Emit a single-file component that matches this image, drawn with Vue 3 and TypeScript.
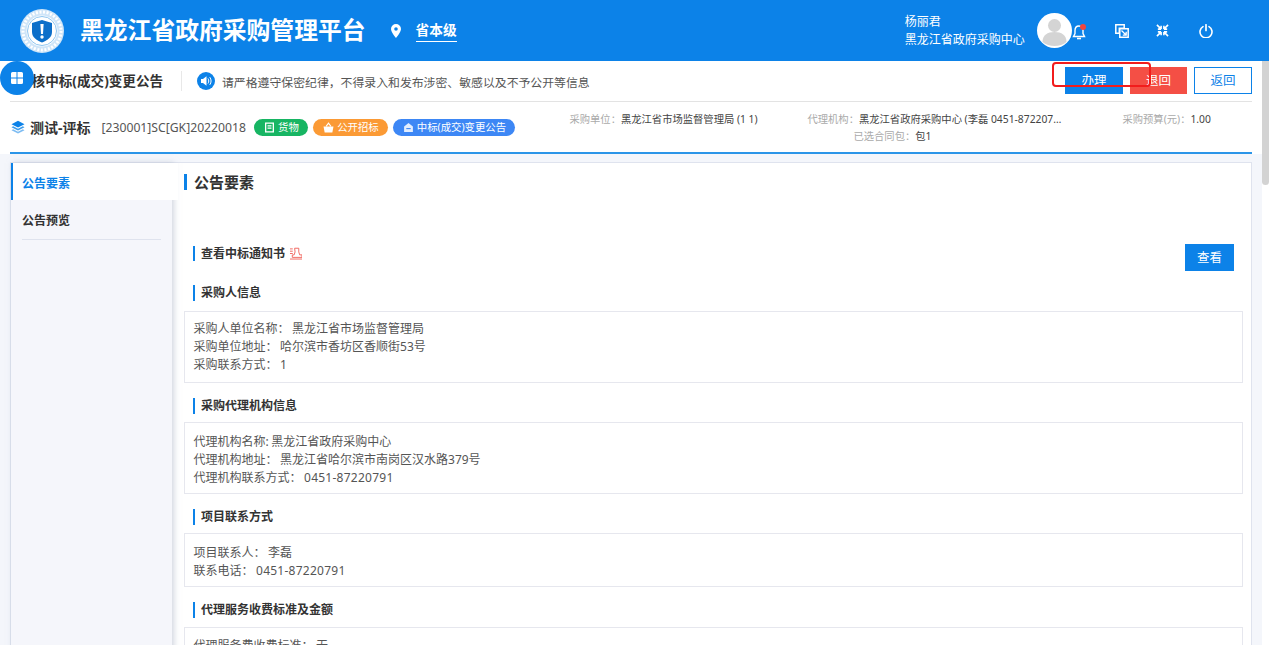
<script setup lang="ts">
interface Sec { title: string; lines: [string, string][]; cls: string }
const sections: Sec[] = [
  { title: '采购人信息', cls: 's-a', lines: [['采购人单位名称：', '黑龙江省市场监督管理局'], ['采购单位地址：', '哈尔滨市香坊区香顺街53号'], ['采购联系方式：', '1']] },
  { title: '采购代理机构信息', cls: 's-b', lines: [['代理机构名称:', '黑龙江省政府采购中心'], ['代理机构地址：', '黑龙江省哈尔滨市南岗区汉水路379号'], ['代理机构联系方式：', '0451-87220791']] },
  { title: '项目联系方式', cls: 's-c', lines: [['项目联系人：', '李磊'], ['联系电话：', '0451-87220791']] },
  { title: '代理服务收费标准及金额', cls: 's-d', lines: [['代理服务费收费标准：', '无']] }
]
const isNumber = (v: string): boolean => /^[\d-]+$/.test(v)
</script>

<template>
  <div class="page">
    <header class="top">
      <svg class="logo" viewBox="0 0 44 44">
        <circle cx="22" cy="22" r="22" fill="#cfe5f8" />
        <circle cx="22" cy="22" r="19" fill="none" stroke="#fff" stroke-width="3" stroke-dasharray="2 1.6" />
        <circle cx="22" cy="22" r="15.5" fill="#fff" />
        <circle cx="22" cy="22" r="14.500" fill="none" stroke="#8fc5ef" stroke-width="1" />
        <path d="M22 11 L32 14 V23 C32 28.500 27 31.500 22 33.500 C17 31.500 12 28.500 12 23 V14 Z" fill="#0d6fc9" />
        <path d="M20.400 15 H23.600 L23 25 H21 Z" fill="#fff" />
        <circle cx="22" cy="28" r="1.700" fill="#fff" />
      </svg>
      <h1 class="brand">黑龙江省政府采购管理平台</h1>
      <svg class="pin" viewBox="0 0 12 14">
        <path fill="#fff" fill-rule="evenodd" d="M6 0a5 5 0 0 1 5 5c0 3.400-5 9-5 9S1 8.400 1 5a5 5 0 0 1 5-5Zm0 3.200a1.800 1.800 0 1 0 0 3.600 1.800 1.800 0 0 0 0-3.600Z" />
      </svg>
      <span class="region">省本级</span>
      <div class="user">
        <div class="user-name">杨丽君</div>
        <div>黑龙江省政府采购中心</div>
      </div>
      <div class="avatar">
        <svg viewBox="0 0 35 35">
          <circle cx="17.5" cy="12.500" r="6.500" fill="#d4d4d4" />
          <path d="M5.500 29c0-7 5-10 12-10s12 3 12 10c-3 2.500-7.500 4-12 4s-9-1.500-12-4Z" fill="#d4d4d4" />
        </svg>
      </div>
      <div class="bell">
        <svg viewBox="0 0 14 18">
          <path d="M7 3c-2.600 0-4 2-4 4.500v3L1.500 13.500h11L11 10.500v-3C11 5 9.600 3 7 3Z" fill="none" stroke="#fff" stroke-width="1.400" />
          <path d="M5 15.500h4" stroke="#fff" stroke-width="1.600" />
        </svg>
        <i class="dot"></i>
      </div>
      <svg class="tool t1" viewBox="0 0 14 14">
        <path d="M.8.800h8.400v3.500H4.300v4.900H.8Z M4.800 4.800h8.400v8.400H4.800Z" fill="none" stroke="#fff" stroke-width="1.500" />
        <path d="M6.500 6.500l4.500 4.500M11.200 7.800v3.400H7.800" fill="none" stroke="#fff" stroke-width="1.300" />
      </svg>
      <svg class="tool t2" viewBox="0 0 14 14">
        <path d="M1 1l3.500 3.500M5.500 5.500V2M5.500 5.500H2M13 1L9.500 4.500M8.500 5.500V2M8.500 5.500H12M1 13l3.500-3.500M5.500 8.500V12M5.500 8.500H2M13 13L9.500 9.500M8.500 8.500V12M8.500 8.500H12" fill="none" stroke="#fff" stroke-width="1.700" />
      </svg>
      <svg class="tool t3" viewBox="0 0 14 14">
        <path d="M4 2.600a6 6 0 1 0 6 0" fill="none" stroke="#fff" stroke-width="1.600" stroke-linecap="round" />
        <path d="M7 .8v5.600" fill="none" stroke="#fff" stroke-width="1.700" stroke-linecap="round" />
      </svg>
    </header>

    <button class="fab" type="button" aria-label="菜单">
      <svg viewBox="0 0 14 14"><path fill="#fff" d="M1 2.500A1.500 1.500 0 0 1 2.500 1h4v5.500H1ZM7.500 1h4A1.500 1.500 0 0 1 13 2.500v4H7.500ZM1 7.500h5.500V13h-4A1.500 1.500 0 0 1 1 11.500ZM7.500 7.500H13v4a1.500 1.500 0 0 1-1.500 1.500h-4Z" /></svg>
    </button>

    <section class="sheet">
      <div class="bar">
        <h2 class="bar-title">审核中标(成交)变更公告</h2>
        <span class="bar-sep"></span>
        <svg class="horn" viewBox="0 0 18 18">
          <circle cx="9" cy="9" r="9" fill="#0c82e8" />
          <path d="M4 7h2l3.500-2.700v9.400L6 11H4Z" fill="#fff" />
          <path d="M11 6.500c1 1.500 1 3.500 0 5M12.800 5.200c1.700 2.300 1.700 5.300 0 7.600" stroke="#fff" fill="none" stroke-width="1" />
        </svg>
        <span class="notice">请严格遵守保密纪律，不得录入和发布涉密、敏感以及不予公开等信息</span>
        <div class="actions">
          <button class="btn primary" type="button">办理</button>
          <button class="btn danger" type="button">退回</button>
          <button class="btn ghost" type="button">返回</button>
          <i class="mark"></i>
        </div>
      </div>

      <div class="info">
        <svg class="stack" viewBox="0 0 14 14">
          <path d="M7 .8l6.500 3.400L7 7.600.5 4.200Z" fill="#0c82e8" />
          <path d="M2.200 6.300L.5 7.200 7 10.600l6.500-3.400-1.700-.9L7 8.800Z" fill="#3d9ceb" />
          <path d="M2.200 9.300L.5 10.200 7 13.600l6.500-3.400-1.700-.9L7 11.800Z" fill="#7dbcf2" />
        </svg>
        <strong class="project">测试-评标</strong>
        <span class="code">[230001]SC[GK]20220018</span>
        <span class="tag green">
          <svg viewBox="0 0 10 10"><path d="M1.500 1h7v8h-7ZM3.200 3.500h3.600M3.200 5.500h3.600" fill="none" stroke="#fff" stroke-width="1.200" /></svg>货物
        </span>
        <span class="tag orange">
          <svg viewBox="0 0 10 10"><path d="M.5 4h9L8.500 9.500h-7Z" fill="#fff" /><path d="M2.800 4L5 1l2.200 3" fill="none" stroke="#fff" stroke-width="1" /></svg>公开招标
        </span>
        <span class="tag blue">
          <svg viewBox="0 0 10 10"><path d="M5 1l4 3v5H1V4Z" fill="#fff" opacity=".85" /><path d="M3 6h4" stroke="#3d87f5" /></svg>中标(成交)变更公告
        </span>
        <div class="meta m1"><span>采购单位：</span>黑龙江省市场监督管理局 (1 1)</div>
        <div class="meta m2">
          <div class="ellip"><span>代理机构：</span>黑龙江省政府采购中心 (李磊 0451-87220791)</div>
          <div class="pkg"><span>已选合同包：</span>包1</div>
        </div>
        <div class="meta m3"><span>采购预算(元)：</span>1.00</div>
      </div>

      <div class="work">
        <div class="card">
          <aside class="side">
            <div class="side-item on">公告要素</div>
            <div class="side-item"><span>公告预览</span></div>
          </aside>
          <main class="content">
            <h3 class="h-main">公告要素</h3>
            <div class="row-notify">
              <h4 class="h-sub">查看中标通知书</h4>
              <svg class="stamp" viewBox="0 0 13 13">
                <path d="M0 1.500h3M0 4h3M0 6.500h3M5 .8h4.500v4L10.500 8H13v2.700H2.500V8H4.500l1-3.200Z M0 12.500h13" fill="none" stroke="#f0625a" stroke-width="1" />
              </svg>
              <button class="btn primary view" type="button">查看</button>
            </div>
            <template v-for="s in sections" :key="s.title">
              <h4 class="h-sub sec">{{ s.title }}</h4>
              <div class="box" :class="s.cls">
                <div v-for="l in s.lines" :key="l[0]" class="line"><span class="k">{{ l[0] }}</span><span :class="{ num: isNumber(l[1]) }">{{ l[1] }}</span></div>
              </div>
            </template>
          </main>
        </div>
      </div>
    </section>
    <div class="scroll"></div>
  </div>
</template>

<style>
html, body { margin: 0; overflow: hidden; }
</style>

<style scoped>
.page {
  position: relative;
  width: 1269px;
  height: 645px;
  overflow: hidden;
  background: #fff;
  font-family: "Noto Sans", "Noto Sans CJK SC", sans-serif;
  color: #444;
  font-size: 12px;
}
button { font-family: inherit; }
.top {
  height: 61px;
  background: #0c82e8;
  display: flex;
  align-items: center;
  color: #fff;
  padding-left: 20px;
  box-sizing: border-box;
}
.logo { width: 44px; height: 44px; flex: none; }
.brand { margin: 0 0 0 16px; font-size: 23.800px; font-weight: 700; line-height: 1; white-space: nowrap; }
.pin { width: 12px; height: 14px; margin-left: 24px; flex: none; }
.region {
  margin-left: 14px;
  font-size: 13.700px;
  font-weight: 700;
  line-height: 20px;
  padding-bottom: 1px;
  border-bottom: 1px solid #fff;
}
.user { margin-left: 448px; width: 132px; line-height: 18px; font-size: 12px; }
.avatar {
  width: 35px;
  height: 35px;
  border-radius: 50%;
  background: #fff;
  overflow: hidden;
  flex: none;
}
.avatar svg { display: block; width: 35px; height: 35px; }
.bell { position: relative; width: 14px; height: 18px; flex: none; margin-top: 3px; }
.bell svg { display: block; width: 14px; height: 18px; }
.dot { position: absolute; top: 1px; right: 0; width: 6px; height: 6px; border-radius: 50%; background: #f2453d; }
.tool { width: 14px; height: 14px; flex: none; }
.t1 { margin-left: 29px; }
.t2 { margin-left: 27.500px; width: 13px; height: 13px; }
.t3 { margin-left: 29.500px; }
.fab {
  position: absolute;
  left: 0;
  top: 61px;
  width: 34px;
  height: 34px;
  border: 0;
  border-radius: 50%;
  background: #0c82e8;
  padding: 10px;
  z-index: 2;
}
.fab svg { display: block; width: 14px; height: 14px; }
.sheet { padding: 0 17px 0 10px; }
.bar {
  height: 40px;
  border-bottom: 1px solid #e3e3e3;
  display: flex;
  align-items: center;
  padding-left: 8px;
}
.bar-title { margin: 0; font-size: 13.600px; font-weight: 700; color: #333; white-space: nowrap; line-height: 1; width: 145px; flex: none; }
.bar-sep { width: 1px; height: 20px; background: #e8e8e8; margin-left: 18px; }
.horn { width: 18px; height: 18px; margin-left: 15px; flex: none; }
.notice { margin-left: 7px; font-size: 11.870px; color: #555; white-space: nowrap; }
.actions { position: relative; margin-left: auto; display: flex; gap: 7px; align-self: flex-start; padding-top: 6px; }
.btn {
  width: 58px;
  height: 27px;
  padding: 0;
  border: 0;
  font-size: 12.500px;
  line-height: 27px;
  border-radius: 0;
  color: #fff;
}
.primary { background: #0c82e8; }
.danger { background: #f44f45; width: 57px; }
.ghost { background: #fff; color: #0c82e8; border: 1px solid #0c82e8; box-sizing: border-box; line-height: 25px; }
.mark {
  position: absolute;
  left: -13px;
  top: 1px;
  width: 99px;
  height: 25px;
  box-sizing: border-box;
  border: 2px solid #f21c1c;
  border-radius: 4px;
  pointer-events: none;
}
.info {
  height: 50px;
  display: flex;
  align-items: center;
  position: relative;
  border-bottom: 2px solid #2b95e8;
  padding-left: 1px;
}
.stack { width: 14px; height: 14px; flex: none; }
.project { margin-left: 5px; font-size: 14px; font-weight: 700; color: #333; white-space: nowrap; }
.code { margin-left: 11px; font-size: 12.200px; color: #555; white-space: nowrap; width: 144px; flex: none; }
.tag {
  height: 17px;
  border-radius: 9px;
  color: #fff;
  font-size: 10.400px;
  line-height: 17px;
  display: flex;
  align-items: center;
  justify-content: center;
  gap: 3px;
  flex: none;
  margin-left: 5px;
}
.tag svg { width: 11px; height: 11px; flex: none; }
.green { background: #17b563; width: 54px; margin-left: 9px; }
.orange { background: #fb9a35; width: 75px; }
.blue { background: #3d87f5; width: 122px; }
.meta { font-size: 10.300px; color: #444; white-space: nowrap; align-self: flex-start; line-height: 16px; }
.meta span { color: #aaa; }
.m1 { margin: 9px 0 0 54px; width: 238px; flex: none; }
.m2 { margin: 9px 0 0 0; width: 256px; flex: none; }
.ellip { overflow: hidden; text-overflow: ellipsis; width: 256px; }
.pkg { padding-left: 46px; margin-top: 1px; }
.m3 { margin: 9px 0 0 59px; }
.work { background: #f4f6fb; margin: 0 -10px; padding: 8px 10px 0; height: 600px; }
.card {
  background: #fff;
  border: 1px solid #dfe3ee;
  display: flex;
  min-height: 560px;
}
.side { width: 161px; flex: none; background: #f5f6fb; box-shadow: 2px 0 6px rgba(170, 178, 196, .55); position: relative; }
.side-item { height: 39px; padding: 0 11px; font-size: 12px; font-weight: 700; color: #333; line-height: 41px; }
.side-item span { display: block; border-bottom: 1px solid #dfe3ee; height: 39px; }
.side-item.on {
  height: 37px;
  line-height: 41px;
  background: #fff;
  color: #0c82e8;
  border-left: 2px solid #0c82e8;
  padding-left: 9px;
  box-shadow: 2px 0 0 #fff, 6px 0 0 #fff;
  position: relative;
}
.content { flex: 1; min-width: 0; padding: 11px 8px 0 12px; }
.h-main {
  margin: 0;
  font-size: 15px;
  font-weight: 700;
  color: #333;
  line-height: 16px;
  border-left: 3px solid #0c82e8;
  padding-left: 7px;
}
.row-notify { display: flex; align-items: flex-start; margin: 54px 9px 0 9px; height: 27px; position: relative; }
.h-sub {
  margin: 2px 0 0;
  font-size: 12px;
  font-weight: 700;
  color: #333;
  line-height: 15px;
  border-left: 2px solid #0c82e8;
  padding-left: 6px;
}
.stamp { width: 12px; height: 13px; margin: 3px 0 0 5px; flex: none; }
.view { margin-left: auto; width: 49px; }
.sec { margin: 15px 0 0 9px; line-height: 16px; }
.row-notify + .sec { margin-top: 14px; }
.box {
  margin-top: 8px;
  border: 1px solid #e6e7ee;
  padding: 8px 9px 8px 8.500px;
  line-height: 18px;
  font-size: 12px;
  color: #555;
}
.s-a { margin-top: 10px; }
.s-b, .s-c { padding-top: 10px; padding-bottom: 6px; }
.s-d { margin-top: 9px; padding-top: 9px; }
.line { white-space: nowrap; }
.k { margin-right: 2.500px; }
.num { letter-spacing: .25px; }
.scroll {
  position: absolute;
  right: 0;
  top: 61px;
  width: 7px;
  height: 124px;
  background: #d3d3d3;
  border-radius: 0 0 4px 4px;
}
</style>
